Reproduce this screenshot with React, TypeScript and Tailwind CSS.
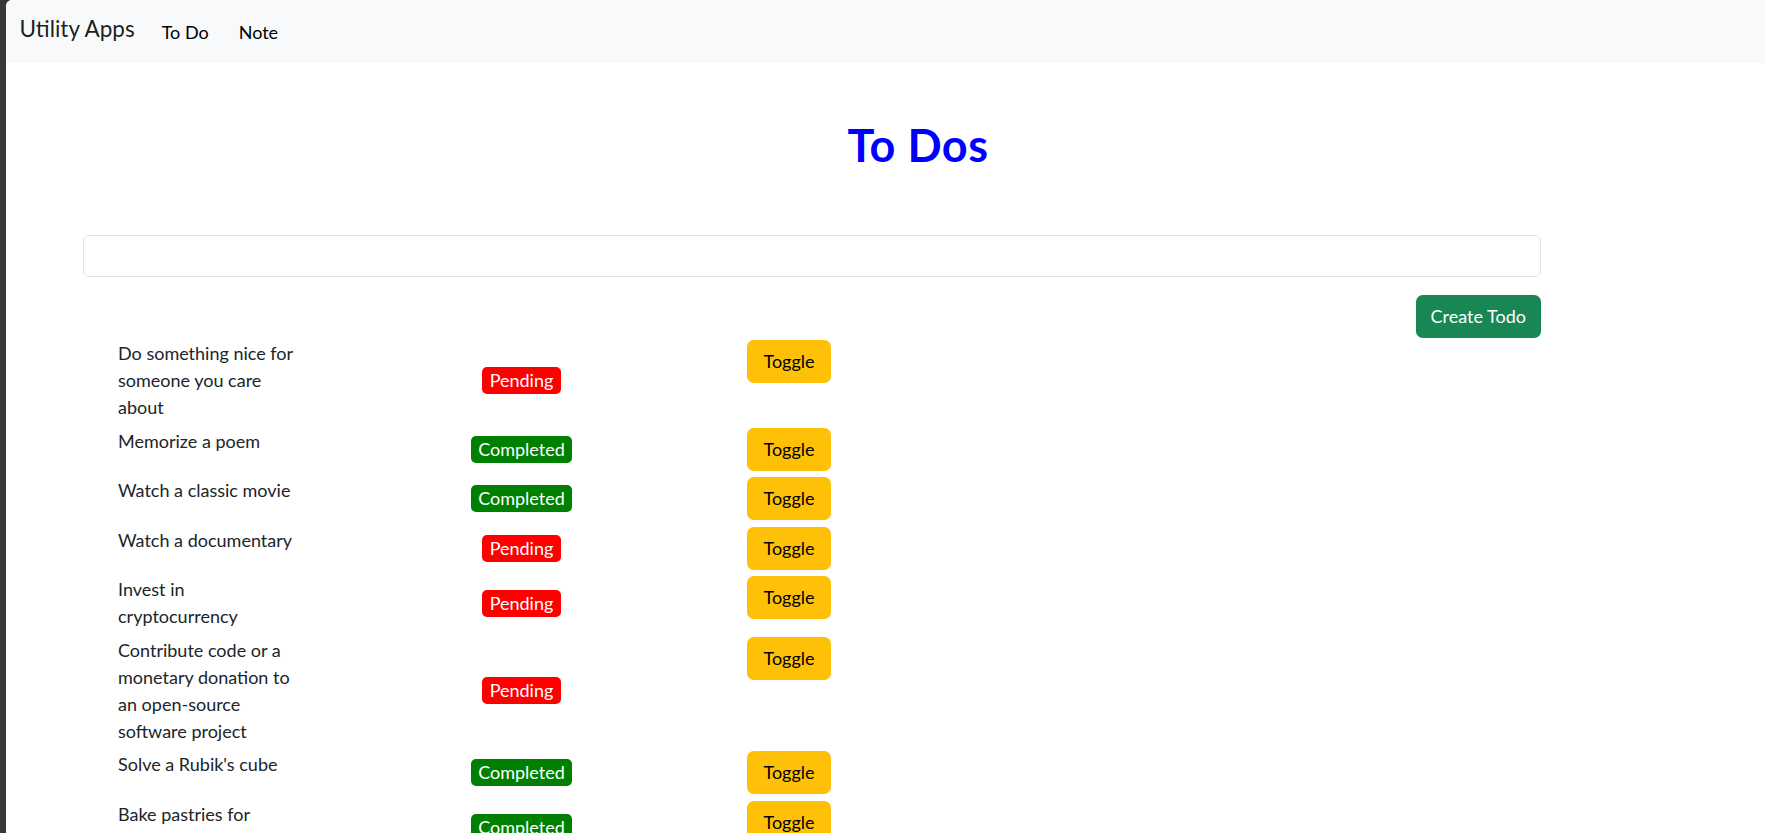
import { useState } from "react";

const TODOS = [
  { id: 1, todo: "Do something nice for someone you care about", completed: false },
  { id: 2, todo: "Memorize a poem", completed: true },
  { id: 3, todo: "Watch a classic movie", completed: true },
  { id: 4, todo: "Watch a documentary", completed: false },
  { id: 5, todo: "Invest in cryptocurrency", completed: false },
  { id: 6, todo: "Contribute code or a monetary donation to an open-source software project", completed: false },
  { id: 7, todo: "Solve a Rubik's cube", completed: true },
  { id: 8, todo: "Bake pastries for yourself and neighbor", completed: true },
  { id: 9, todo: "Go see a Broadway production", completed: false },
];

function Navbar() {
  return (
    <nav className="flex h-[63px] items-center bg-[#f8f9fa] pl-[13.5px]">
      <a href="#" className="mb-[7px] mr-[18px] text-[22.5px] leading-[27px] text-black/90">
        Utility Apps
      </a>
      <ul className="mt-[1.5px] flex items-center gap-[12px] text-[18px] leading-[27px] text-black">
        <li className="px-[9px]">
          <a href="#">To Do</a>
        </li>
        <li className="px-[9px]">
          <a href="#">Note</a>
        </li>
      </ul>
    </nav>
  );
}

function StatusBadge({ completed }: { completed: boolean }) {
  return (
    <span
      className={
        completed
          ? "rounded-[5px] bg-[#008000] px-[7px] leading-[27px] text-white"
          : "rounded-[5px] bg-[#ff0000] px-[8px] leading-[27px] text-white"
      }
    >
      {completed ? "Completed" : "Pending"}
    </span>
  );
}

export default function App() {
  const [todos, setTodos] = useState(TODOS);
  const [text, setText] = useState("");

  const toggle = (id: number) =>
    setTodos((list) => list.map((t) => (t.id === id ? { ...t, completed: !t.completed } : t)));

  return (
    <div className="flex h-screen overflow-hidden bg-[#383838] font-['Lato','Segoe_UI',sans-serif]">
      <div className="w-[6px] shrink-0" />
      <div className="min-w-0 flex-1 overflow-hidden rounded-tl-[6px] bg-white">
        <Navbar />
        <main className="pt-[55px] text-[18px] leading-[27px] text-[#212529]">
          <h1 className="pl-[65px] text-center text-[45px] font-bold leading-[54px] tracking-[0.5px] text-[#0000ff]">
            To Dos
          </h1>
          <div className="mt-[63px] pl-[77px] pr-[224px]">
            <input
              value={text}
              onChange={(e) => setText(e.target.value)}
              className="block h-[42px] w-full rounded-[6.75px] border border-[#dee2e6] px-[13.5px] outline-none"
            />
            <div className="mt-[18px] flex justify-end">
              <button
                type="button"
                className="h-[43px] rounded-[6.75px] bg-[#198754] px-[15px] text-white"
              >
                Create Todo
              </button>
            </div>
          </div>
          <ul className="mt-[2px] flex flex-col gap-[6.5px] pl-[112px]">
            {todos.map((t) => (
              <li key={t.id} className="flex items-start">
                <span className="w-[186px]">{t.todo}</span>
                <div className="flex w-[435px] justify-center self-center">
                  <StatusBadge completed={t.completed} />
                </div>
                <button
                  type="button"
                  onClick={() => toggle(t.id)}
                  className="ml-[8px] h-[43px] rounded-[6.75px] bg-[#ffc107] px-[16.5px] text-black"
                >
                  Toggle
                </button>
              </li>
            ))}
          </ul>
        </main>
      </div>
    </div>
  );
}
